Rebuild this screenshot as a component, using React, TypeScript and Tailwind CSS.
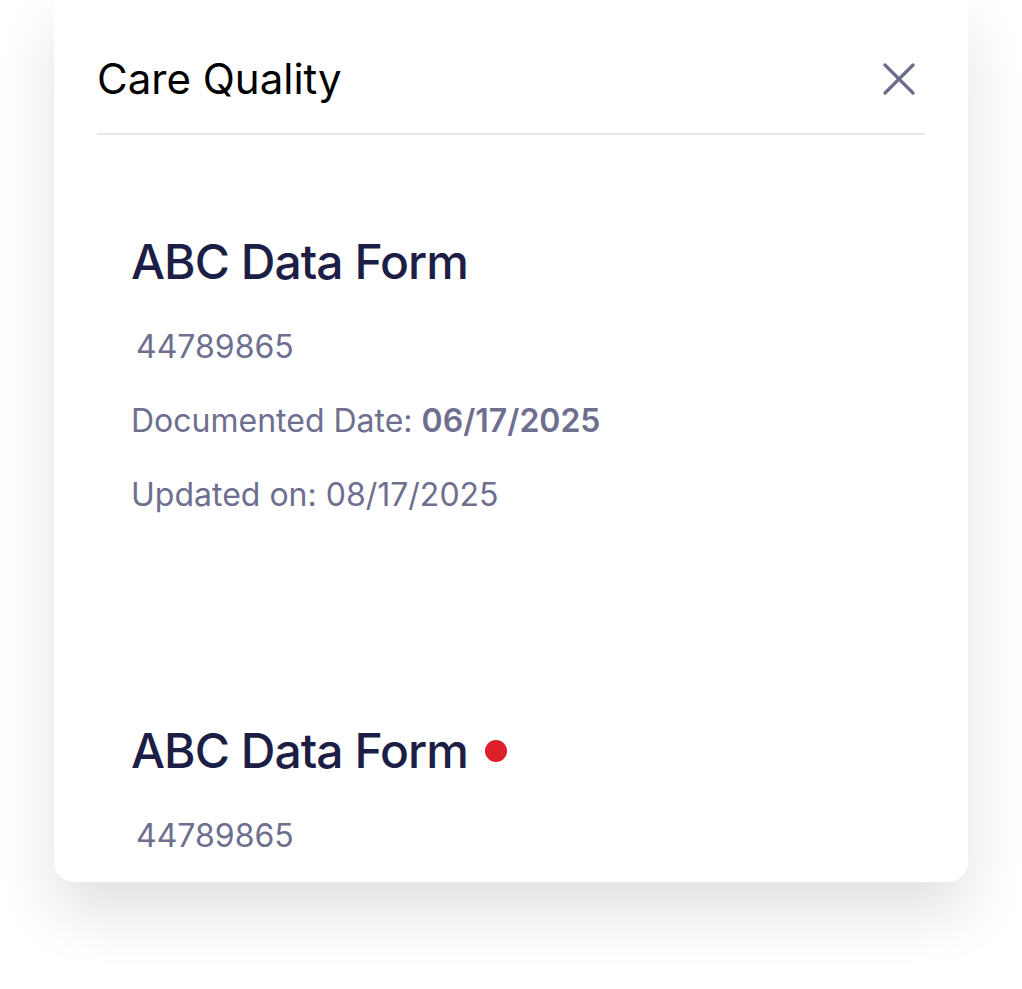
const records = [
  { id: 1, title: "ABC Data Form", code: "44789865", documented: "06/17/2025", updated: "08/17/2025", flagged: false },
  { id: 2, title: "ABC Data Form", code: "44789865", documented: null, updated: null, flagged: true },
];

function CloseIcon() {
  return (
    <svg width="32" height="32" viewBox="0 0 32 32" fill="none" stroke="#6b6c8c" strokeWidth="3.2" strokeLinecap="round">
      <path d="M2 2 30 30M30 2 2 30" />
    </svg>
  );
}

export default function App() {
  return (
    <div className="min-h-[989px] bg-white font-['Inter',sans-serif]">
      <div className="mx-[54px] rounded-b-[20px] bg-white px-[43px] pb-[30px] shadow-[0_30px_60px_rgba(0,0,0,0.12)]">
        <header className="flex items-center justify-between border-b-2 border-[#e7e7e9] pb-[33px] pt-[58px]">
          <h1 className="text-[42px] leading-none text-black">Care Quality</h1>
          <button className="mr-[10px]">
            <CloseIcon />
          </button>
        </header>
        <ul className="px-[34px] pt-[103px]">
          {records.map((r, i) => (
            <li key={r.id} className={i > 0 ? "mt-[216px]" : ""}>
              <h2 className="flex items-center text-[48px] font-medium leading-none tracking-[-0.02em] text-[#1c1e45]">
                {r.title}
                {r.flagged && <span className="ml-[17px] inline-block h-[22px] w-[22px] rounded-full bg-[#dc1f2a]" />}
              </h2>
              <div className="mt-[45px] space-y-[42px] text-[32px] leading-none text-[#6e6f8f]">
                <p className="pl-[5px]">{r.code}</p>
                {r.documented && (
                  <p>
                    Documented Date: <span className="font-semibold">{r.documented}</span>
                  </p>
                )}
                {r.updated && <p>Updated on: {r.updated}</p>}
              </div>
            </li>
          ))}
        </ul>
      </div>
    </div>
  );
}
